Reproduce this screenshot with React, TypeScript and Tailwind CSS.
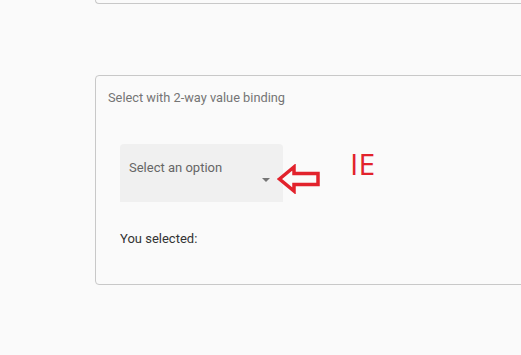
import React from 'react';

const SelectBox: React.FC = () => {
  return (
    <div className="flex justify-between w-[163px] h-[58px] pl-[9px] pr-[13px] pt-[16px] bg-[#f0f0f0] rounded-t-[4px]">
      <span className="text-[13px] leading-4 text-[#666]">Select an option</span>
      <span className="mt-[18px] w-0 h-0 border-l-[4px] border-r-[4px] border-t-[4px] border-l-transparent border-r-transparent border-t-[#757575]" />
    </div>
  );
};

export default function App() {
  return (
    <div className="relative w-full h-[355px] overflow-hidden bg-[#fafafa] font-['Roboto',sans-serif]">
      <div className="ml-[95px] w-[460px] h-[4px] border-l border-b border-[#c8c8c8] rounded-bl-[4px]" />

      <div className="flex flex-col ml-[95px] mt-[71px] w-[460px] h-[210px] border border-[#c8c8c8] rounded-[4px]">
        <p className="pl-[12px] pt-[14px] text-[12.8px] leading-4 text-[#757575]">Select with 2-way value binding</p>
        <div className="pl-[24px] pt-[38px]">
          <SelectBox />
        </div>
        <p className="pl-[24px] pt-[29px] text-[13px] leading-4 text-[#333]">You selected:</p>
      </div>

      {/* annotation overlay */}
      <svg className="absolute left-[277px] top-[164px]" width="44" height="30" viewBox="0 0 44 30">
        <path d="M2.5 15 L17 3 L17 9.5 L41 9.5 L41 20.5 L17 20.5 L17 27 Z" fill="none" stroke="#e2222c" strokeWidth="3.5" strokeLinejoin="miter" />
      </svg>
      <span className="absolute left-[350px] top-[144px] text-[30px] leading-[40px] text-[#e2222c] font-['Open_Sans',sans-serif]">IE</span>
    </div>
  );
}
